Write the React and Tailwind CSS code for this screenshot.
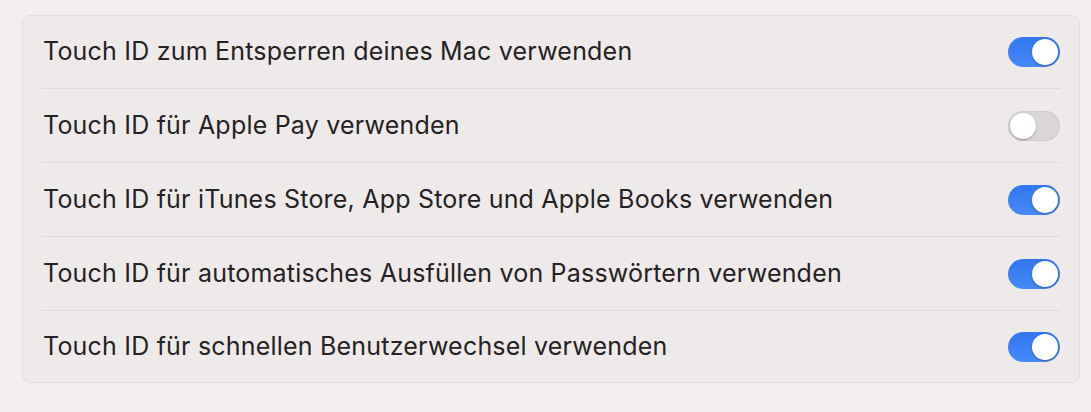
import React from 'react';

const rows = [
  { label: 'Touch ID zum Entsperren deines Mac verwenden', on: true },
  { label: 'Touch ID für Apple Pay verwenden', on: false },
  { label: 'Touch ID für iTunes Store, App Store und Apple Books verwenden', on: true },
  { label: 'Touch ID für automatisches Ausfüllen von Passwörtern verwenden', on: true },
  { label: 'Touch ID für schnellen Benutzerwechsel verwenden', on: true },
];

function Toggle({ on }) {
  return (
    <div
      className={`w-[52px] h-[30px] rounded-full p-[2px] flex items-center ${
        on ? 'bg-gradient-to-b from-[#3176f0] to-[#4689f8] justify-end' : 'bg-[#dad6d5] justify-start shadow-[inset_0_0_0_1px_#cfcaca]'
      }`}
    >
      <div className="w-[26px] h-[26px] rounded-full bg-white shadow-[0_1px_2px_rgba(0,0,0,0.3)]" />
    </div>
  );
}

export default function App() {
  return (
    <div className="w-[1091px] h-[412px] bg-[#f3eeee] pt-[15px] pl-[22px] pr-[11px]" style={{ fontFamily: 'Inter, "Noto Sans", sans-serif' }}>
      <div className="bg-[#efeaea] border border-[#e2dddd] rounded-[9px] px-[19px]">
        {rows.map((row, i) => {
          const last = i === rows.length - 1;
          const h = i === 0 ? 'h-[73px]' : last ? 'h-[71px]' : 'h-[74px]';
          return (
            <div
              key={i}
              className={`${h} flex items-center justify-between ${last ? '' : 'border-b border-[#dfdada]'}`}
            >
              <span className="text-[25px] tracking-[0.2px] text-[#242222] pl-[1px]">{row.label}</span>
              <Toggle on={row.on} />
            </div>
          );
        })}
      </div>
    </div>
  );
}
